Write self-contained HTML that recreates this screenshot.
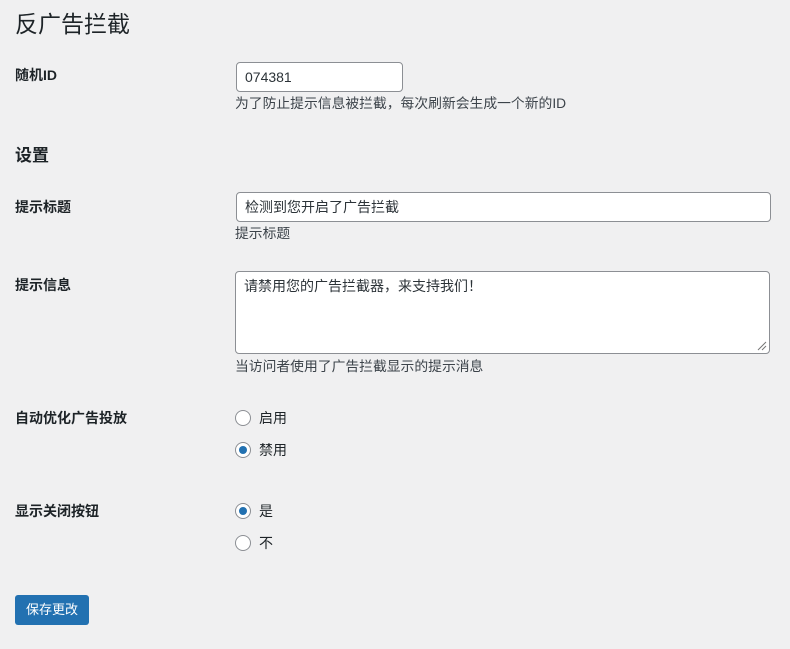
<!DOCTYPE html>
<html><head><meta charset="utf-8"><style>
body{margin:0;width:790px;height:649px;background:#f0f0f1;font-family:"Liberation Sans","Noto Sans CJK SC",sans-serif;color:#1d2327;font-size:14px;position:relative;overflow:hidden}
.a{position:absolute;white-space:nowrap}
.lbl{font-weight:bold;font-size:14px}
.inp{position:absolute;background:#fff;border:1px solid #8c8f94;border-radius:4px;box-sizing:border-box;font-size:14px;color:#2c3338;padding-left:8px}
.desc{font-size:13.8px;color:#3c434a}
.r{position:absolute;width:16px;height:16px;border:1px solid #8c8f94;border-radius:50%;background:#fff;box-sizing:border-box}
.r.on::after{content:"";position:absolute;left:3px;top:3px;width:8px;height:8px;border-radius:50%;background:#2271b1}
</style></head><body>
<div class="a" style="left:15px;top:5px;font-size:23px;font-weight:400">反广告拦截</div>
<div class="a lbl" style="left:15px;top:65px">随机ID</div>
<div class="inp" style="left:236px;top:62px;width:167px;height:30px;line-height:28px;font-size:14px">074381</div>
<div class="a desc" style="left:235px;top:92px">为了防止提示信息被拦截，每次刷新会生成一个新的ID</div>
<div class="a" style="left:15px;top:141px;font-size:17px;font-weight:bold">设置</div>
<div class="a lbl" style="left:15px;top:197px">提示标题</div>
<div class="inp" style="left:236px;top:192px;width:535px;height:30px;line-height:28px">检测到您开启了广告拦截</div>
<div class="a desc" style="left:235px;top:222px">提示标题</div>
<div class="a lbl" style="left:15px;top:275px">提示信息</div>
<div class="inp" style="left:235px;top:271px;width:535px;height:83px;padding-top:4px">请禁用您的广告拦截器，来支持我们！
<svg style="position:absolute;right:2px;bottom:2px" width="12" height="12"><path d="M11 3L3 11M11 7L7 11" stroke="#777" stroke-width="1"/></svg></div>
<div class="a desc" style="left:235px;top:355px">当访问者使用了广告拦截显示的提示消息</div>
<div class="a lbl" style="left:15px;top:408px">自动优化广告投放</div>
<div class="r" style="left:235px;top:410px"></div><div class="a" style="left:259px;top:408px">启用</div>
<div class="r on" style="left:235px;top:442px"></div><div class="a" style="left:259px;top:440px">禁用</div>
<div class="a lbl" style="left:15px;top:501px">显示关闭按钮</div>
<div class="r on" style="left:235px;top:503px"></div><div class="a" style="left:259px;top:501px">是</div>
<div class="r" style="left:235px;top:535px"></div><div class="a" style="left:259px;top:533px">不</div>
<div class="a" style="left:15px;top:595px;width:74px;height:30px;background:#2271b1;border-radius:3px;color:#fff;text-align:center;line-height:29px;font-size:13px">保存更改</div>
</body></html>
